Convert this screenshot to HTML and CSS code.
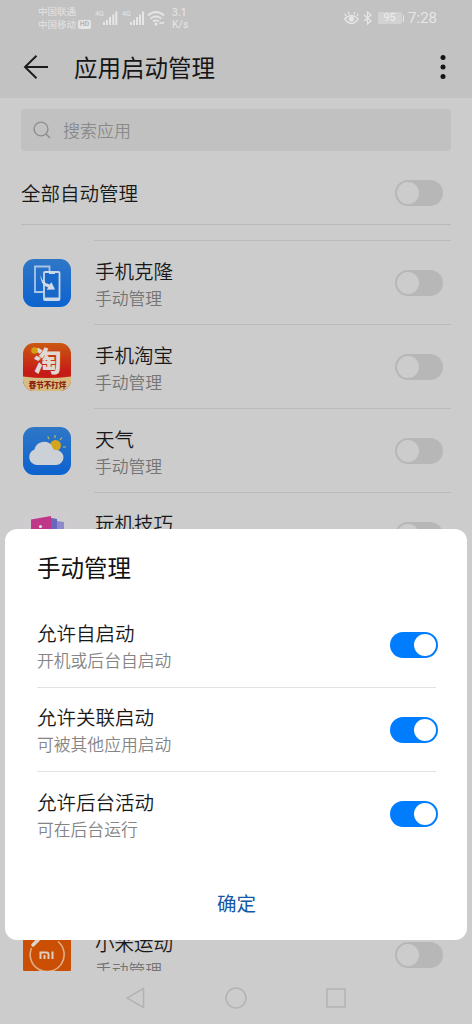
FILE: index.html
```html
<!DOCTYPE html>
<html lang="zh-CN">
<head>
<meta charset="utf-8">
<title>应用启动管理</title>
<link rel="stylesheet" href="styles.css">
</head>
<body>
<div class="screen">
  <header class="top">
    <div class="status">
      <div class="carriers"><span>中国联通</span><span>中国移动<b class="hd">HD</b></span></div>
      <svg class="signals" width="100" height="22" viewBox="0 0 100 22" fill="#e6e6e6">
        <text x="0" y="9" class="net">4G</text>
        <path d="M8 15h2v3H8zM11 13h2v5h-2zM14 10h2v8h-2zM17.300 7.500h2V18h-2zM20.300 4.500h2V18h-2z"/>
        <text x="27" y="9" class="net">4G</text>
        <path d="M35 15h2v3h-2zM38 13h2v5h-2zM41 10h2v8h-2zM44 7.500h2V18h-2zM47 4.500h2V18h-2z"/>
        <g fill="none" stroke="#e6e6e6" stroke-width="1.700"><path d="M53 8.500q8-7 16 0M55.500 11.700q5.500-4.600 11 0M58 14.500q3-2.400 6 0"/></g>
        <circle cx="61" cy="17" r="1.500"/><path d="M64 17l1.500-2.500L67 17zM66.500 15h3L68 17.800z"/>
        <text x="77" y="9" class="speed">3.1</text><text x="77" y="20.500" class="speed">K/s</text>
      </svg>
      <div class="status-right">
        <svg width="15" height="14" viewBox="0 0 15 14" fill="none" stroke="#e6e6e6" stroke-width="1.300"><path d="M.7 8Q7.500 1 14.300 8Q7.500 17 .7 8zM2 5L.8 2.800M5 3.300L4.300 1M10 3.300l.7-2.300M13 5l1.200-2.200"/><circle cx="7.500" cy="8" r="2" fill="#e6e6e6"/></svg>
        <svg width="10" height="14" viewBox="0 0 10 14" fill="none" stroke="#e6e6e6" stroke-width="1.200"><path d="M1 4l7 6-3.500 3V1L8 4l-7 6"/></svg>
        <span class="battery">95</span><i class="cap"></i>
        <span class="clock">7:28</span>
      </div>
    </div>
    <div class="titlebar">
      <svg width="26" height="26" viewBox="0 0 26 26" fill="none" stroke="#1b1b1b" stroke-width="1.900"><path d="M25 13H2M13.500 1.800L2 13l11.500 11.200"/></svg>
      <h1>应用启动管理</h1>
      <svg class="more" width="6" height="26" viewBox="0 0 6 26" fill="#151515"><circle cx="3" cy="3.500" r="2.500"/><circle cx="3" cy="13" r="2.500"/><circle cx="3" cy="22.500" r="2.500"/></svg>
    </div>
  </header>
  <div class="search">
    <svg width="18" height="18" viewBox="0 0 18 18" fill="none" stroke="#8e8e8e" stroke-width="1.400"><circle cx="8" cy="8" r="6.900"/><path d="M13 13l4 4"/></svg>
    <span>搜索应用</span>
  </div>
  <div class="all"><span class="name">全部自动管理</span><i class="switch"></i></div>
  <main class="list">
    <div class="row">
      <svg class="icon" viewBox="0 0 48 48">
        <defs><linearGradient id="blue" x1="0" y1="0" x2="0" y2="1"><stop offset="0" stop-color="#2f77c6"/><stop offset="1" stop-color="#0d62cf"/></linearGradient></defs>
        <rect width="48" height="48" rx="11" fill="url(#blue)"/>
        <path d="M20.500 33H12V7.500h14.500v5" fill="none" stroke="#a9c5e6" stroke-width="1.800"/>
        <rect x="21" y="13" width="15.500" height="28" rx="1" fill="#1768c9" stroke="#cbd8e7" stroke-width="1.800"/>
        <path d="M26 13h6v2h-6zM22 38.500h14V41H22z" fill="#cbd8e7"/>
        <path d="M17.500 16q1.500 8 9 9.500l2-2.300 3.500 7.300-8.300.3 1.500-2.300Q17 25.500 17.500 16z" fill="#d3dce6"/>
      </svg>
      <div class="body"><div><div class="name">手机克隆</div><div class="sub">手动管理</div></div><i class="switch"></i></div>
    </div>
    <div class="row">
      <svg class="icon" viewBox="0 0 48 48">
        <defs><linearGradient id="red" x1="0" y1="0" x2="0" y2="1"><stop offset="0" stop-color="#cb5811"/><stop offset=".6" stop-color="#c51c17"/></linearGradient><clipPath id="round"><rect width="48" height="48" rx="11"/></clipPath></defs>
        <g clip-path="url(#round)"><path fill="url(#red)" d="M0 0h48v48H0z"/><path d="M0 33.500q24 3 48 0V48H0z" fill="#d5bd83"/></g>
        <text x="24.500" y="29" class="tao">淘</text>
        <circle cx="11.500" cy="7.500" r="3.300" fill="#d39e13"/>
        <text x="24.500" y="44.500" class="fest">春节不打烊</text>
      </svg>
      <div class="body"><div><div class="name">手机淘宝</div><div class="sub">手动管理</div></div><i class="switch"></i></div>
    </div>
    <div class="row">
      <svg class="icon" viewBox="0 0 48 48">
        <rect width="48" height="48" rx="11" fill="url(#blue)"/>
        <path d="M26 12l-1.300-2.500M32 11V8M37 13l2-2.500M40 20h3" stroke="#b9bd59" stroke-width="1.200"/>
        <circle cx="32.500" cy="18.500" r="5.500" fill="#d3a51c"/>
        <path d="M13.500 38a8 8 0 0 1-2-15.500A9.800 9.800 0 0 1 29 19q1 4.500 4 4a7.500 7.500 0 0 1 0 15z" fill="#ccd1d7"/>
      </svg>
      <div class="body"><div><div class="name">天气</div><div class="sub">手动管理</div></div><i class="switch"></i></div>
    </div>
    <div class="row">
      <svg class="icon" viewBox="0 0 48 48">
        <rect width="48" height="48" rx="11" fill="#cfcccf"/>
        <path d="M30 9.500l11 1.500v29H30z" fill="#8d89cb"/><path d="M24 6l10 2v34H24z" fill="#6866bd"/><path d="M8 8.500l20-3.500v38L8 40z" fill="#be3788"/><circle cx="17.500" cy="15.500" r="1.600" fill="#ddd"/><path d="M16 19h3v12h-3z" fill="#ddd"/>
      </svg>
      <div class="body"><div><div class="name">玩机技巧</div></div><i class="switch"></i></div>
    </div>
    <div class="row last">
      <svg class="icon" viewBox="0 0 48 48">
        <rect width="48" height="48" rx="11" fill="#cb4e05"/>
        <path d="M8.500 17A17 17 0 1 0 35 10.500" fill="none" stroke="#dfb08c" stroke-width="1.600"/>
        <path d="M10 14l5-5" stroke="#ddd4cb" stroke-width="3.500" stroke-linecap="round"/>
        <path d="M17.500 28v-6.500h6q2 0 2 2V28M21.500 24v4M29.500 20.600V28" fill="none" stroke="#dfcfbf" stroke-width="2"/>
      </svg>
      <div class="body"><div><div class="name">小米运动</div><div class="sub">手动管理</div></div><i class="switch"></i></div>
    </div>
  </main>
  <nav class="nav">
    <svg width="21" height="22" viewBox="0 0 21 22"><path d="M18.500 1.500v19L2 11z"/></svg>
    <svg width="22" height="22" viewBox="0 0 22 22"><circle cx="11" cy="11" r="10"/></svg>
    <svg width="20" height="22" viewBox="0 0 20 22"><path d="M1 2h18v18H1z"/></svg>
  </nav>
  <section class="dialog">
    <h2>手动管理</h2>
    <div class="option"><div><div class="name">允许自启动</div><div class="sub">开机或后台自启动</div></div><i class="switch on"></i></div>
    <div class="option"><div><div class="name">允许关联启动</div><div class="sub">可被其他应用启动</div></div><i class="switch on"></i></div>
    <div class="option"><div><div class="name">允许后台活动</div><div class="sub">可在后台运行</div></div><i class="switch on"></i></div>
    <button class="ok">确定</button>
  </section>
</div>
</body>
</html>
```
FILE: styles.css
```css
* { box-sizing: border-box; }
body { margin: 0; font-family: "Noto Sans CJK SC", sans-serif; font-weight: 350; }
h1, h2 { margin: 0; font-size: 23.5px; font-weight: 400; line-height: 34px; }
svg { display: block; flex: none; }

.screen { position: relative; width: 472px; height: 1024px; overflow: hidden; display: flex; flex-direction: column; background: #ccc; }

.top { height: 98px; flex: none; background: #c2c2c2; }
.status { height: 36px; padding: 5px 35px 0 38px; display: flex; color: #e6e6e6; }
.carriers { width: 57px; display: flex; flex-direction: column; font-size: 9.500px; line-height: 13px; white-space: nowrap; }
.carriers span { display: flex; align-items: center; }
.hd { margin-left: 2px; width: 13px; height: 9px; border-radius: 2px; background: #e6e6e6; color: #b5b5b5; font: bold 7px/9px Roboto, sans-serif; text-align: center; }
.signals { margin-top: 2px; }
.net { font: 7px Roboto, sans-serif; }
.speed { font: 10.500px Roboto, sans-serif; }
.status-right { margin-left: auto; height: 26px; display: flex; align-items: center; }
.status-right svg + svg { margin-left: 4px; }
.battery { margin-left: 5px; width: 24px; height: 12px; border-radius: 2px; background: #d2d2d2; color: #eee; font: 11px/12px Roboto, sans-serif; text-align: center; }
.cap { width: 1.500px; height: 7px; margin: 0 4px 0 1px; background: #e6e6e6; }
.clock { font: 15px/26px Roboto, sans-serif; }
.titlebar { height: 62px; padding: 0 26px 0 23px; display: flex; align-items: center; color: #161616; }
.titlebar h1 { margin-left: 25px; }
.more { margin-left: auto; }

.search { flex: none; height: 42px; margin: 11px 21px 0; padding-left: 12px; border-radius: 4px; background: #c1c1c1; display: flex; align-items: center; color: #8a8a8a; font-size: 17px; }
.search span { margin: -2px 0 0 12px; }
.all { flex: none; height: 74px; margin: 0 21px; padding: 11px 8px 0 0; display: flex; align-items: center; justify-content: space-between; border-bottom: 1px solid #b9b9b9; }

.name { color: #181818; font-size: 19.500px; line-height: 28px; }
.sub { color: #747474; font-size: 16.800px; line-height: 26px; }

.switch { flex: none; width: 48px; height: 26px; padding: 2px; border-radius: 13px; background: #b7b7b7; display: flex; }
.switch::before { content: ""; width: 22px; height: 22px; border-radius: 50%; background: #ccc; }
.switch.on { background: #007dff; justify-content: flex-end; }
.switch.on::before { background: #fff; }

.list { flex: none; height: 731px; margin-top: 15px; overflow: hidden; }
.row { height: 84px; padding: 0 21px 0 23px; display: flex; align-items: center; }
.icon { width: 48px; height: 48px; margin-top: 2px; }
.body { flex: 1; height: 84px; margin-left: 23px; padding: 1px 8px 0 1px; border-top: 1px solid #bbb; display: flex; align-items: flex-start; justify-content: space-between; }
.body > div { padding-top: 15px; }
.body .switch { margin-top: 28px; }
.row.last { margin-top: 336px; }
.tao { font: 900 28px/1 "Noto Sans CJK SC", sans-serif; fill: #e0d8d3; text-anchor: middle; }
.fest { font: 900 7.500px/1 "Noto Sans CJK SC", sans-serif; fill: #8d2412; text-anchor: middle; }

.nav { flex: 1; display: flex; justify-content: center; align-items: center; gap: 79px; padding-right: 2px; }
.nav svg { fill: none; stroke: #b3b3b3; stroke-width: 1.500; }

.dialog { position: absolute; left: 5px; top: 529px; width: 462px; height: 411px; padding: 21px 29px 0 32px; border-radius: 12px; background: #fff; display: flex; flex-direction: column; }
.dialog h2 { margin-bottom: 19px; color: #111; }
.option { height: 84.500px; display: flex; align-items: center; justify-content: space-between; position: relative; }
.option + .option::before { content: ""; position: absolute; left: 0; right: 2px; top: -1px; height: 1px; background: #e2e2e2; }
.option .sub { color: #858585; }
.option > div { padding-top: 1px; }
.ok { margin: 30px auto 0; padding: 0; border: 0; background: none; color: #1359a5; font: 400 19.500px/32px "Noto Sans CJK SC", sans-serif; position: relative; left: -1px; }
```
